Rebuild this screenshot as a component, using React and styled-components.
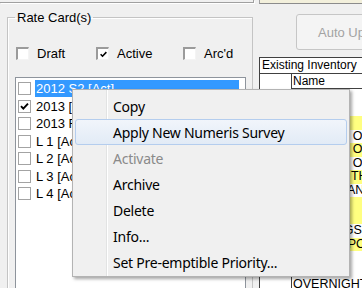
import styled, { createGlobalStyle } from "styled-components";

const GlobalStyle = createGlobalStyle`
  html, body {
    margin: 0;
    padding: 0;
    background: #f0f0f0;
  }
  body {
    font-family: "Liberation Sans", Arial, sans-serif;
    font-size: 13px;
    color: #000;
  }
`;

const Window = styled.div`
  position: relative;
  width: 362px;
  height: 288px;
  overflow: hidden;
  background: #f0f0f0;
  display: flex;
  flex-direction: column;
`;

const TopStrip = styled.div`
  display: flex;
  gap: 5px;
  height: 4px;
  flex-shrink: 0;
`;

const TopLeftBox = styled.div`
  width: 254px;
  height: 3px;
  box-sizing: border-box;
  border-right: 1px solid #a0a0a0;
  border-bottom: 1px solid #a0a0a0;
  box-shadow: 1px 1px 0 #fff;
`;

const TopRightBox = styled.div`
  flex: 1;
  height: 4px;
  box-sizing: border-box;
  background: #f3f0dc;
  border-left: 1px solid #a0a0a0;
  border-bottom: 1px solid #8c8c8c;
`;

const Body = styled.div`
  display: flex;
  flex: 1;
`;

const LeftCol = styled.div`
  width: 253px;
  flex-shrink: 0;
`;

const GroupBox = styled.fieldset`
  margin: 6px 0 0 7px;
  padding: 0;
  width: 246px;
  height: 320px;
  box-sizing: border-box;
  min-width: 0;
  border: 1px solid #c4c4c4;
  box-shadow: inset 1px 1px 0 #fff;
`;

const Legend = styled.legend`
  margin-left: 7px;
  padding: 0 2px;
  font-size: 13px;
  line-height: 15px;
`;

const OptionRow = styled.div`
  display: grid;
  grid-template-columns: 80px 87px auto;
  margin-top: 20px;
  padding-left: 8px;
  height: 17px;
  align-items: center;
`;

const Option = styled.label`
  display: flex;
  align-items: center;
  gap: 8px;
`;

const Box3D = styled.span`
  width: 13px;
  height: 13px;
  box-sizing: border-box;
  background: #fff;
  border-style: solid;
  border-width: 2px 1px 1px 2px;
  border-color: #9b9b9b #f4f4f4 #f4f4f4 #9b9b9b;
  display: flex;
  align-items: center;
  justify-content: center;
`;

const ListBox = styled.div`
  margin: 15px 0 0 7px;
  width: 231px;
  height: 240px;
  box-sizing: border-box;
  background: #fff;
  border: 1px solid #8e949c;
  padding: 2px 6px 0 2px;
`;

const ListRow = styled.div`
  display: flex;
  align-items: center;
  gap: 4px;
  height: 17.5px;
`;

const FlatBox = styled.span`
  width: 13px;
  height: 13px;
  box-sizing: border-box;
  border: 1px solid #a3a3a3;
  background: #fff;
  flex-shrink: 0;
  display: flex;
  align-items: center;
  justify-content: center;
`;

const ItemText = styled.span`
  flex: 1;
  padding: 0 1px;
  line-height: 17px;
  white-space: nowrap;
  background: ${(p) => (p.$selected ? "#3399ff" : "transparent")};
  color: ${(p) => (p.$selected ? "#fff" : "#000")};
`;

const RightCol = styled.div`
  width: 220px;
  flex-shrink: 0;
  margin-left: 6px;
  display: flex;
  flex-direction: column;
`;

const AutoButton = styled.button`
  margin: 10px 0 0 37px;
  width: 92px;
  height: 36px;
  padding: 0 0 0 21px;
  font-family: "Liberation Sans", Arial, sans-serif;
  font-size: 13px;
  color: #a3a3a3;
  background: #f4f4f4;
  border: 1px solid #c6c6c6;
  border-radius: 3px;
  text-align: left;
  white-space: nowrap;
  overflow: hidden;
`;

const Grid = styled.div`
  margin-top: 7px;
  border-left: 1px solid #404040;
  border-top: 1px solid #404040;
  background: #fff;
  font-size: 12px;
`;

const GridCaption = styled.div`
  height: 15px;
  line-height: 15px;
  padding-left: 2px;
  border-bottom: 1px solid #404040;
  background: #fff;
  white-space: nowrap;
`;

const GridRow = styled.div`
  display: grid;
  grid-template-columns: 32px 1fr;
  height: ${(p) => (p.$header ? "15px" : "13.5px")};
`;

const RowHead = styled.div`
  border-right: 1px solid #404040;
  background: #fff;
`;

const NameCell = styled.div`
  padding-left: 1px;
  font-size: ${(p) => (p.$header ? "12px" : "12.5px")};
  line-height: ${(p) => (p.$header ? "15px" : "13.5px")};
  white-space: nowrap;
  overflow: hidden;
  background: ${(p) => (p.$yellow ? "#ffff80" : "#fff")};
  border-bottom: ${(p) => (p.$header ? "1px solid #404040" : "none")};
`;

const Menu = styled.div`
  position: absolute;
  left: 72px;
  top: 89px;
  width: 278px;
  box-sizing: border-box;
  padding: 3px 2px 1px;
  border: 1px solid #b3b3b3;
  background: linear-gradient(
      to right,
      transparent 33px,
      #e2e3e3 33px,
      #e2e3e3 34px,
      #ffffff 34px,
      #ffffff 35px,
      transparent 35px
    ),
    #f0f0f0;
  box-shadow: 2px 2px 3px rgba(0, 0, 0, 0.35);
  font-family: "Noto Sans", "Open Sans", sans-serif;
  font-size: 14px;
  letter-spacing: -0.25px;
`;

const MenuItem = styled.div`
  height: 26px;
  box-sizing: border-box;
  display: flex;
  align-items: center;
  padding-left: 37px;
  border: 1px solid ${(p) => (p.$hover ? "#b4cdee" : "transparent")};
  border-radius: 3px;
  background: ${(p) =>
    p.$hover ? "linear-gradient(#f1f5fb, #e2ebf6)" : "transparent"};
  color: ${(p) => (p.$disabled ? "#8a8a8a" : "#000")};
`;

function Check({ size = 13 }) {
  return (
    <svg width={size - 2} height={size - 2} viewBox="0 0 11 11">
      <path d="M2 5.2 L4.3 7.6 L9 2.6" fill="none" stroke="#000" strokeWidth="1.9" />
    </svg>
  );
}

const rateCards = [
  { name: "2012 S2 [Act]", selected: true },
  { name: "2013 [Act]", checked: true },
  { name: "2013 F1 [Act]" },
  { name: "L 1 [Act]" },
  { name: "L 2 [Act]" },
  { name: "L 3 [Act]" },
  { name: "L 4 [Act]" },
];

const inventory = [
  { name: "NEWS" },
  { name: "PRIME" },
  { name: "", yellow: true },
  { name: "EVENING ONE" },
  { name: "EVENING OPEN", yellow: true },
  { name: "EVENING OTHER" },
  { name: "DAYTIME THEATRE", yellow: true },
  { name: "SPORTS ANALYSIS" },
  { name: "", yellow: true },
  { name: "", yellow: true },
  { name: "MORNINGS" },
  { name: "SPORTS POSTGAME", yellow: true },
  { name: "KIDS" },
  { name: "FILM" },
  { name: "OVERNIGHT" },
];

const menuItems = [
  { label: "Copy" },
  { label: "Apply New Numeris Survey", hover: true },
  { label: "Activate", disabled: true },
  { label: "Archive" },
  { label: "Delete" },
  { label: "Info..." },
  { label: "Set Pre-emptible Priority..." },
];

export default function App() {
  return (
    <Window>
      <GlobalStyle />
      <TopStrip>
        <TopLeftBox />
        <TopRightBox />
      </TopStrip>
      <Body>
        <LeftCol>
          <GroupBox>
            <Legend>Rate Card(s)</Legend>
            <OptionRow>
              <Option>
                <Box3D />
                Draft
              </Option>
              <Option>
                <Box3D>
                  <Check size={11} />
                </Box3D>
                Active
              </Option>
              <Option>
                <Box3D />
                Arc'd
              </Option>
            </OptionRow>
            <ListBox>
              {rateCards.map((card) => (
                <ListRow key={card.name}>
                  <FlatBox>{card.checked && <Check />}</FlatBox>
                  <ItemText $selected={card.selected}>{card.name}</ItemText>
                </ListRow>
              ))}
            </ListBox>
          </GroupBox>
        </LeftCol>
        <RightCol>
          <AutoButton disabled>Auto Update</AutoButton>
          <Grid>
            <GridCaption>Existing Inventory</GridCaption>
            <GridRow $header>
              <RowHead />
              <NameCell $header>Name</NameCell>
            </GridRow>
            {inventory.map((row, i) => (
              <GridRow key={i}>
                <RowHead />
                <NameCell $yellow={row.yellow}>{row.name}</NameCell>
              </GridRow>
            ))}
          </Grid>
        </RightCol>
      </Body>
      <Menu>
        {menuItems.map((item) => (
          <MenuItem key={item.label} $hover={item.hover} $disabled={item.disabled}>
            {item.label}
          </MenuItem>
        ))}
      </Menu>
    </Window>
  );
}
